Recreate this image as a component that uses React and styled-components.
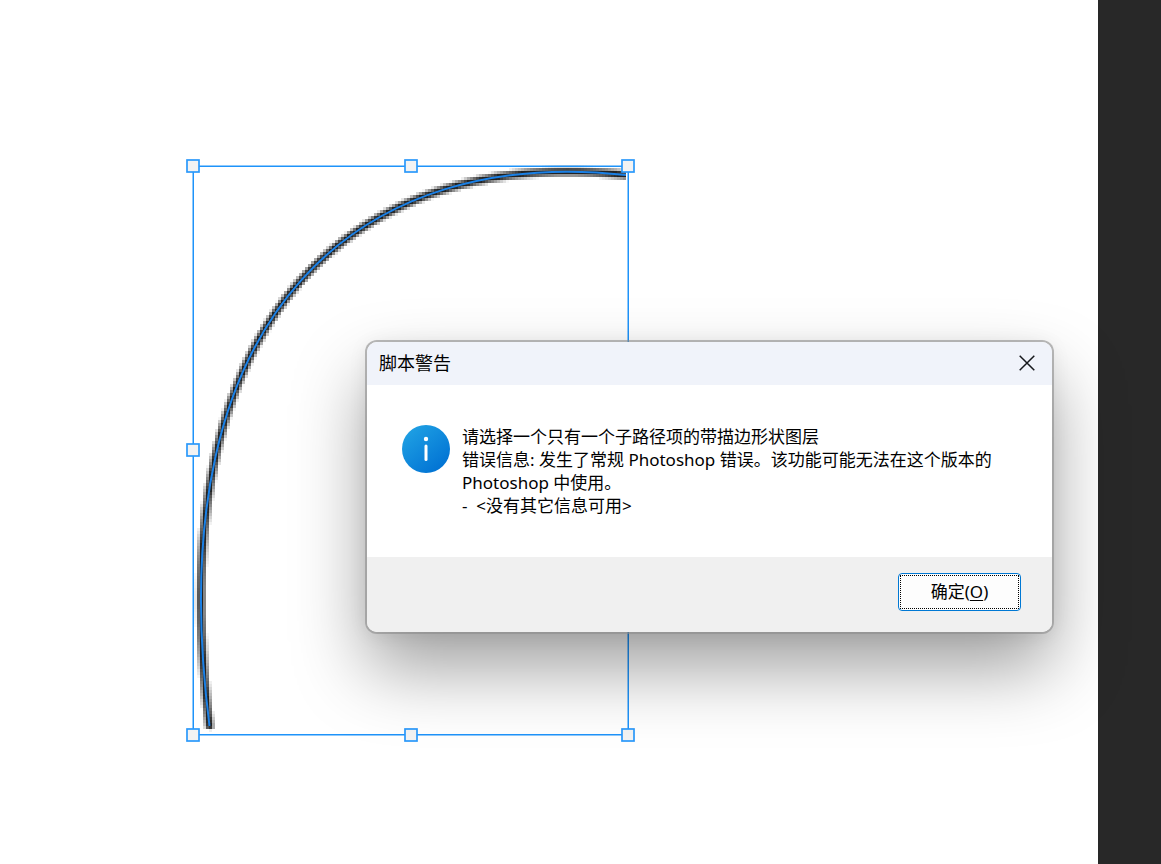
import React, { useMemo, useState } from 'react';
import styled, { createGlobalStyle } from 'styled-components';

const CELL = 3;
const GRID_X = 185;
const GRID_Y = 159;
const COLS = 150;
const ROWS = 194;

// bezier points of the stroked shape
const PATH = [
  [209.5, 726],
  [155, 300],
  [370, 146.5],
  [626, 175],
];

const HANDLES = [
  [193, 166],
  [411, 166],
  [628, 166],
  [193, 450],
  [628, 450],
  [193, 735],
  [411, 735],
  [628, 735],
];

const pointAt = (t) => {
  const u = 1 - t;
  const k = [u * u * u, 3 * u * u * t, 3 * u * t * t, t * t * t];
  return [0, 1].map((axis) =>
    PATH.reduce((sum, point, i) => sum + point[axis] * k[i], 0)
  );
};

// zoomed-in raster of the stroke, one square for each image pixel
const rasterize = () => {
  const distances = new Map();
  for (let i = 0; i <= 700; i++) {
    const [x, y] = pointAt(i / 700);
    const col = Math.floor((x - GRID_X) / CELL);
    const row = Math.floor((y - GRID_Y) / CELL);
    for (let c = col - 3; c <= col + 3; c++) {
      for (let r = row - 3; r <= row + 3; r++) {
        if (c < 0 || r < 0 || c >= COLS || r >= ROWS) continue;
        const cx = GRID_X + (c + 0.5) * CELL;
        const cy = GRID_Y + (r + 0.5) * CELL;
        if (cx > 627) continue;
        const key = r * COLS + c;
        const d = Math.hypot(cx - x, cy - y) + (cy > 728 ? 1 : 0);
        if (!distances.has(key) || distances.get(key) > d) {
          distances.set(key, d);
        }
      }
    }
  }
  return [...distances]
    .map(([key, d]) => ({
      x: GRID_X + (key % COLS) * CELL,
      y: GRID_Y + Math.floor(key / COLS) * CELL,
      alpha: Math.min(1, Math.max(0, (6 - d) / 4.6)),
    }))
    .filter(({ alpha }) => alpha > 0.02);
};

const Artwork = () => {
  const cells = useMemo(rasterize, []);
  const [start, c1, c2, end] = PATH;

  return (
    <Drawing width='660' height='760' aria-hidden='true'>
      <g fill='#222' shapeRendering='crispEdges'>
        {cells.map(({ x, y, alpha }) => (
          <rect
            key={`${x}-${y}`}
            x={x}
            y={y}
            width={CELL}
            height={CELL}
            fillOpacity={alpha.toFixed(2)}
          />
        ))}
      </g>
      <path
        d={`M${start} C${c1} ${c2} ${end}`}
        fill='none'
        stroke='#1a80e6'
        strokeWidth='2'
      />
      <path
        d='M193.25 166.25H628.25V734.75H193.25Z'
        fill='none'
        stroke='#1e93fa'
        strokeWidth='1.5'
      />
      {HANDLES.map(([x, y]) => (
        <rect
          key={`${x}-${y}`}
          x={x - 6}
          y={y - 6}
          width='12'
          height='12'
          fill='#f3f3f3'
          stroke='#2b99fb'
          strokeWidth='1.7'
        />
      ))}
    </Drawing>
  );
};

const App = () => {
  const [isOpen, setIsOpen] = useState(true);
  const close = () => setIsOpen(false);

  return (
    <>
      <GlobalStyle />
      <Workspace>
        <Canvas>
          <Artwork />
        </Canvas>
        <Pasteboard />
        {isOpen && (
          <Dialog role='alertdialog' aria-labelledby='title' aria-describedby='message'>
            <TitleBar>
              <Title id='title'>脚本警告</Title>
              <CloseButton type='button' aria-label='关闭' onClick={close}>
                <svg width='16' height='16' viewBox='0 0 16 16'>
                  <path d='M.7.7 15.3 15.3M15.3.7.7 15.3' stroke='#16181c' strokeWidth='1.5' />
                </svg>
              </CloseButton>
            </TitleBar>
            <Body>
              <InfoIcon viewBox='0 0 48 48' aria-hidden='true'>
                <defs>
                  <linearGradient id='info' x1='0.15' y1='0.1' x2='0.85' y2='0.95'>
                    <stop offset='0' stopColor='#1e9fe3' />
                    <stop offset='1' stopColor='#0071d3' />
                  </linearGradient>
                </defs>
                <circle cx='24' cy='24' r='24' fill='url(#info)' />
                <circle cx='24' cy='14' r='2.2' fill='#fff' />
                <path d='M24 21V34.5' stroke='#fff' strokeWidth='3' strokeLinecap='round' />
              </InfoIcon>
              <Message id='message'>
                <Line>请选择一个只有一个子路径项的带描边形状图层</Line>
                <Line>
                  错误信息: 发生了常规 Photoshop 错误。该功能可能无法在这个版本的 Photoshop 中使用。
                </Line>
                <Line>-&nbsp; &lt;没有其它信息可用&gt;</Line>
              </Message>
            </Body>
            <Footer>
              <OkButton type='button' accessKey='o' onClick={close}>
                <OkLabel>
                  确定(<Underlined>O</Underlined>)
                </OkLabel>
              </OkButton>
            </Footer>
          </Dialog>
        )}
      </Workspace>
    </>
  );
};

export default App;

const GlobalStyle = createGlobalStyle`
  * {
    box-sizing: border-box;
  }
  body {
    margin: 0;
    font-family: 'Noto Sans', 'Noto Sans CJK SC', sans-serif;
    color: #000;
  }
  button {
    font-family: inherit;
    color: inherit;
  }
`;

const Workspace = styled.main`
  position: relative;
  display: flex;
  min-height: 100vh;
  overflow: hidden;
`;
const Canvas = styled.section`
  flex: 1;
  min-width: 0;
  background: #fff;
`;
const Pasteboard = styled.aside`
  flex: 0 0 63px;
  background: #282828;
`;
const Drawing = styled.svg`
  display: block;
`;

const Dialog = styled.div`
  position: absolute;
  top: 342px;
  left: 367px;
  right: 109px;
  border-radius: 10px;
  background: #fff;
  box-shadow: 0 0 0 2px rgba(140, 140, 140, 0.6),
    0 2px 20px rgba(0, 0, 0, 0.08), 0 36px 72px rgba(0, 0, 0, 0.38);
`;
const TitleBar = styled.header`
  display: flex;
  align-items: center;
  justify-content: space-between;
  height: 43px;
  padding: 0 1px 2px 12px;
  border-radius: 10px 10px 0 0;
  background: #f0f3fa;
`;
const Title = styled.h1`
  margin: 0;
  font-size: 18px;
  font-weight: 400;
  line-height: 24px;
`;
const CloseButton = styled.button`
  display: flex;
  align-items: center;
  justify-content: center;
  width: 48px;
  height: 40px;
  padding: 0;
  border: none;
  background: none;
`;

const Body = styled.div`
  display: flex;
  gap: 12px;
  min-height: 172px;
  padding: 40px 36px 40px 35px;
`;
const InfoIcon = styled.svg`
  flex: none;
  width: 48px;
  height: 48px;
`;
const Message = styled.div`
  flex: 1;
  font-size: 17px;
  line-height: 23px;
`;
const Line = styled.p`
  margin: 0;
`;

const Footer = styled.footer`
  display: flex;
  justify-content: flex-end;
  padding: 16px 31px 21px;
  border-radius: 0 0 10px 10px;
  background: #f0f0f0;
`;
const OkButton = styled.button`
  display: flex;
  width: 123px;
  height: 38px;
  padding: 1px;
  border: 1px solid #0078d4;
  border-radius: 4px;
  background: #fdfdfd;
  font-size: 17px;
`;
const OkLabel = styled.span`
  flex: 1;
  height: 34px;
  border: 1px dotted #000;
  line-height: 32px;
`;
const Underlined = styled.u`
  text-underline-offset: 2px;
`;
